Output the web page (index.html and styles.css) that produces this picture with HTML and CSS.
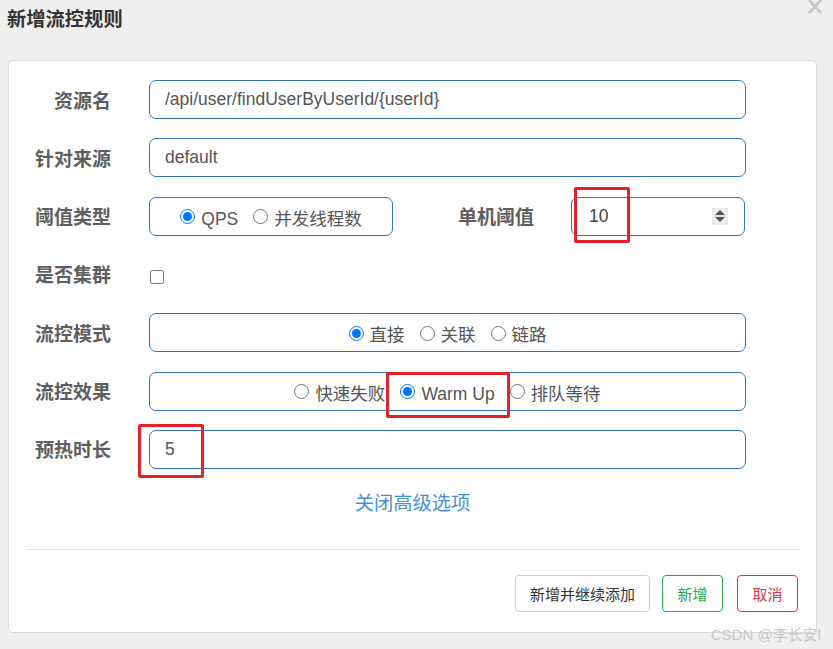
FILE: index.html
```html
<!DOCTYPE html>
<html lang="zh-CN">
<head>
    <meta charset="UTF-8">
    <title>新增流控规则</title>
    <link rel="stylesheet" href="styles.css">
</head>
<body>
    <div class="modal-head">
        <h4 class="modal-title">新增流控规则</h4>
        <svg class="close" width="16" height="14" viewBox="0 0 16 14">
            <path d="M2 0 L14 13 M14 0 L2 13" stroke="#c4c4c4" stroke-width="2.6" fill="none"/>
        </svg>
    </div>

    <div class="card">
        <div class="form-row">
            <label class="form-label">资源名</label>
            <input class="form-input" type="text" value="/api/user/findUserByUserId/{userId}">
        </div>

        <div class="form-row">
            <label class="form-label">针对来源</label>
            <input class="form-input" type="text" value="default">
        </div>

        <div class="form-row">
            <label class="form-label">阈值类型</label>
            <div class="radio-box small">
                <label class="radio"><input type="radio" name="grade" checked> QPS</label>
                <label class="radio"><input type="radio" name="grade"> 并发线程数</label>
            </div>
            <label class="form-label inline">单机阈值</label>
            <div class="num-input">
                <span class="num-value">10</span>
                <span class="spinner">
                    <span class="arrow up"></span>
                    <span class="arrow down"></span>
                </span>
            </div>
        </div>

        <div class="form-row">
            <label class="form-label">是否集群</label>
            <input class="check" type="checkbox">
        </div>

        <div class="form-row">
            <label class="form-label">流控模式</label>
            <div class="radio-box">
                <label class="radio"><input type="radio" name="strategy" checked> 直接</label>
                <label class="radio"><input type="radio" name="strategy"> 关联</label>
                <label class="radio"><input type="radio" name="strategy"> 链路</label>
            </div>
        </div>

        <div class="form-row">
            <label class="form-label">流控效果</label>
            <div class="radio-box">
                <label class="radio"><input type="radio" name="behavior"> 快速失败</label>
                <label class="radio"><input type="radio" name="behavior" checked> Warm Up</label>
                <label class="radio"><input type="radio" name="behavior"> 排队等待</label>
            </div>
        </div>

        <div class="form-row">
            <label class="form-label">预热时长</label>
            <input class="form-input" type="text" value="5">
        </div>

        <div class="advanced">
            <a class="advanced-link">关闭高级选项</a>
        </div>

        <hr class="divider">

        <div class="footer">
            <button class="btn">新增并继续添加</button>
            <button class="btn btn-green">新增</button>
            <button class="btn btn-red">取消</button>
        </div>

        <!-- annotations drawn over the screenshot -->
        <div class="mark mark-threshold"></div>
        <div class="mark mark-warmup"></div>
        <div class="mark mark-period"></div>
    </div>

    <div class="watermark">CSDN @李长安l</div>
</body>
</html>
```

FILE: styles.css
```css
body {
    margin: 0;
    width: 833px;
    height: 649px;
    overflow: hidden;
    position: relative;
    background-color: #efefef;
    font-family: "Liberation Sans", "Noto Sans CJK SC", sans-serif;
    color: #555;
}

.modal-head {
    padding: 8px 7px 0;
    height: 52px;
    box-sizing: border-box;
}

.modal-title {
    margin: 0;
    font-size: 19.3px;
    line-height: 24px;
    font-weight: 700;
    color: #333;
}

.close {
    position: absolute;
    top: 0;
    right: 10px;
}

.card {
    position: relative;
    margin: 8px 16px 0 8px;
    background-color: #fff;
    border: 1px solid #dcdcdc;
    border-radius: 5px;
    padding: 19px 0 20px;
}

.form-row {
    display: flex;
    align-items: center;
    height: 39px;
    margin-bottom: 19.33px;
    padding-right: 70px;
}

.form-label {
    width: 102px;
    flex: none;
    margin-right: 38px;
    padding-top: 4px;
    text-align: right;
    font-size: 19px;
    font-weight: 700;
    color: #5e5e5e;
    line-height: 24px;
}

.form-label.inline {
    width: auto;
    margin-left: 65px;
    margin-right: 37px;
}

.form-input {
    flex: 1;
    height: 39px;
    box-sizing: border-box;
    border: 1px solid #3474b4;
    border-radius: 7px;
    padding: 0 15px;
    font-family: inherit;
    font-size: 17.5px;
    color: #555;
    outline: none;
}

.radio-box {
    flex: 1;
    height: 39px;
    box-sizing: border-box;
    border: 1px solid #3474b4;
    border-radius: 7px;
    display: flex;
    align-items: center;
    justify-content: center;
    padding-top: 5px;
}

.radio-box.small {
    flex: none;
    width: 244px;
}

.radio {
    display: flex;
    align-items: center;
    font-size: 17.5px;
    color: #555;
    margin-right: 15px;
    line-height: 24px;
}

.radio:last-child {
    margin-right: 0;
}

.radio input {
    width: 15px;
    height: 15px;
    margin: 0 6px 4px 0;
    accent-color: #0075ff;
}

.num-input {
    width: 174px;
    height: 39px;
    box-sizing: border-box;
    border: 1px solid #3474b4;
    border-radius: 7px;
    display: flex;
    align-items: center;
    justify-content: space-between;
    padding: 0 16px 0 17px;
}

.num-value {
    font-size: 17.5px;
    color: #444;
}

.spinner {
    width: 16px;
    height: 17px;
    background-color: #ececec;
    display: flex;
    flex-direction: column;
    align-items: center;
    justify-content: center;
    gap: 2px;
}

.arrow {
    width: 0;
    height: 0;
    border-left: 5px solid transparent;
    border-right: 5px solid transparent;
}

.arrow.up {
    border-bottom: 5px solid #555;
}

.arrow.down {
    border-top: 5px solid #555;
}

.check {
    width: 14px;
    height: 14px;
    margin: 6px 0 0 1px;
}

.advanced {
    text-align: center;
    padding-top: 4px;
    line-height: 24px;
}

.advanced-link {
    font-size: 19.3px;
    color: #4a8fd6;
    cursor: pointer;
}

.divider {
    border: 0;
    border-top: 1px solid #e3e3e3;
    margin: 32px 16px 25px 17px;
}

.footer {
    display: flex;
    justify-content: flex-end;
    gap: 12px;
    padding-right: 18px;
}

.btn {
    height: 37px;
    box-sizing: border-box;
    background-color: #fff;
    border: 1px solid #ccc;
    border-radius: 4px;
    font-family: inherit;
    font-size: 15px;
    color: #333;
    padding: 0 14px;
}

.btn-green {
    width: 61px;
    padding: 0;
    border-color: #28a745;
    color: #28a745;
}

.btn-red {
    width: 61px;
    padding: 0;
    margin-left: 2px;
    border-color: #dc3545;
    color: #dc3545;
}

.mark {
    position: absolute;
    border: 3px solid #e8202a;
    border-radius: 2px;
    box-sizing: border-box;
}

.mark-threshold {
    left: 565px;
    top: 126px;
    width: 56px;
    height: 56px;
}

.mark-warmup {
    left: 377px;
    top: 311px;
    width: 124px;
    height: 46px;
}

.mark-period {
    left: 129px;
    top: 363px;
    width: 66px;
    height: 54px;
}

.watermark {
    position: absolute;
    right: 12px;
    bottom: 5px;
    font-size: 15px;
    color: #c8c8c8;
}
```
